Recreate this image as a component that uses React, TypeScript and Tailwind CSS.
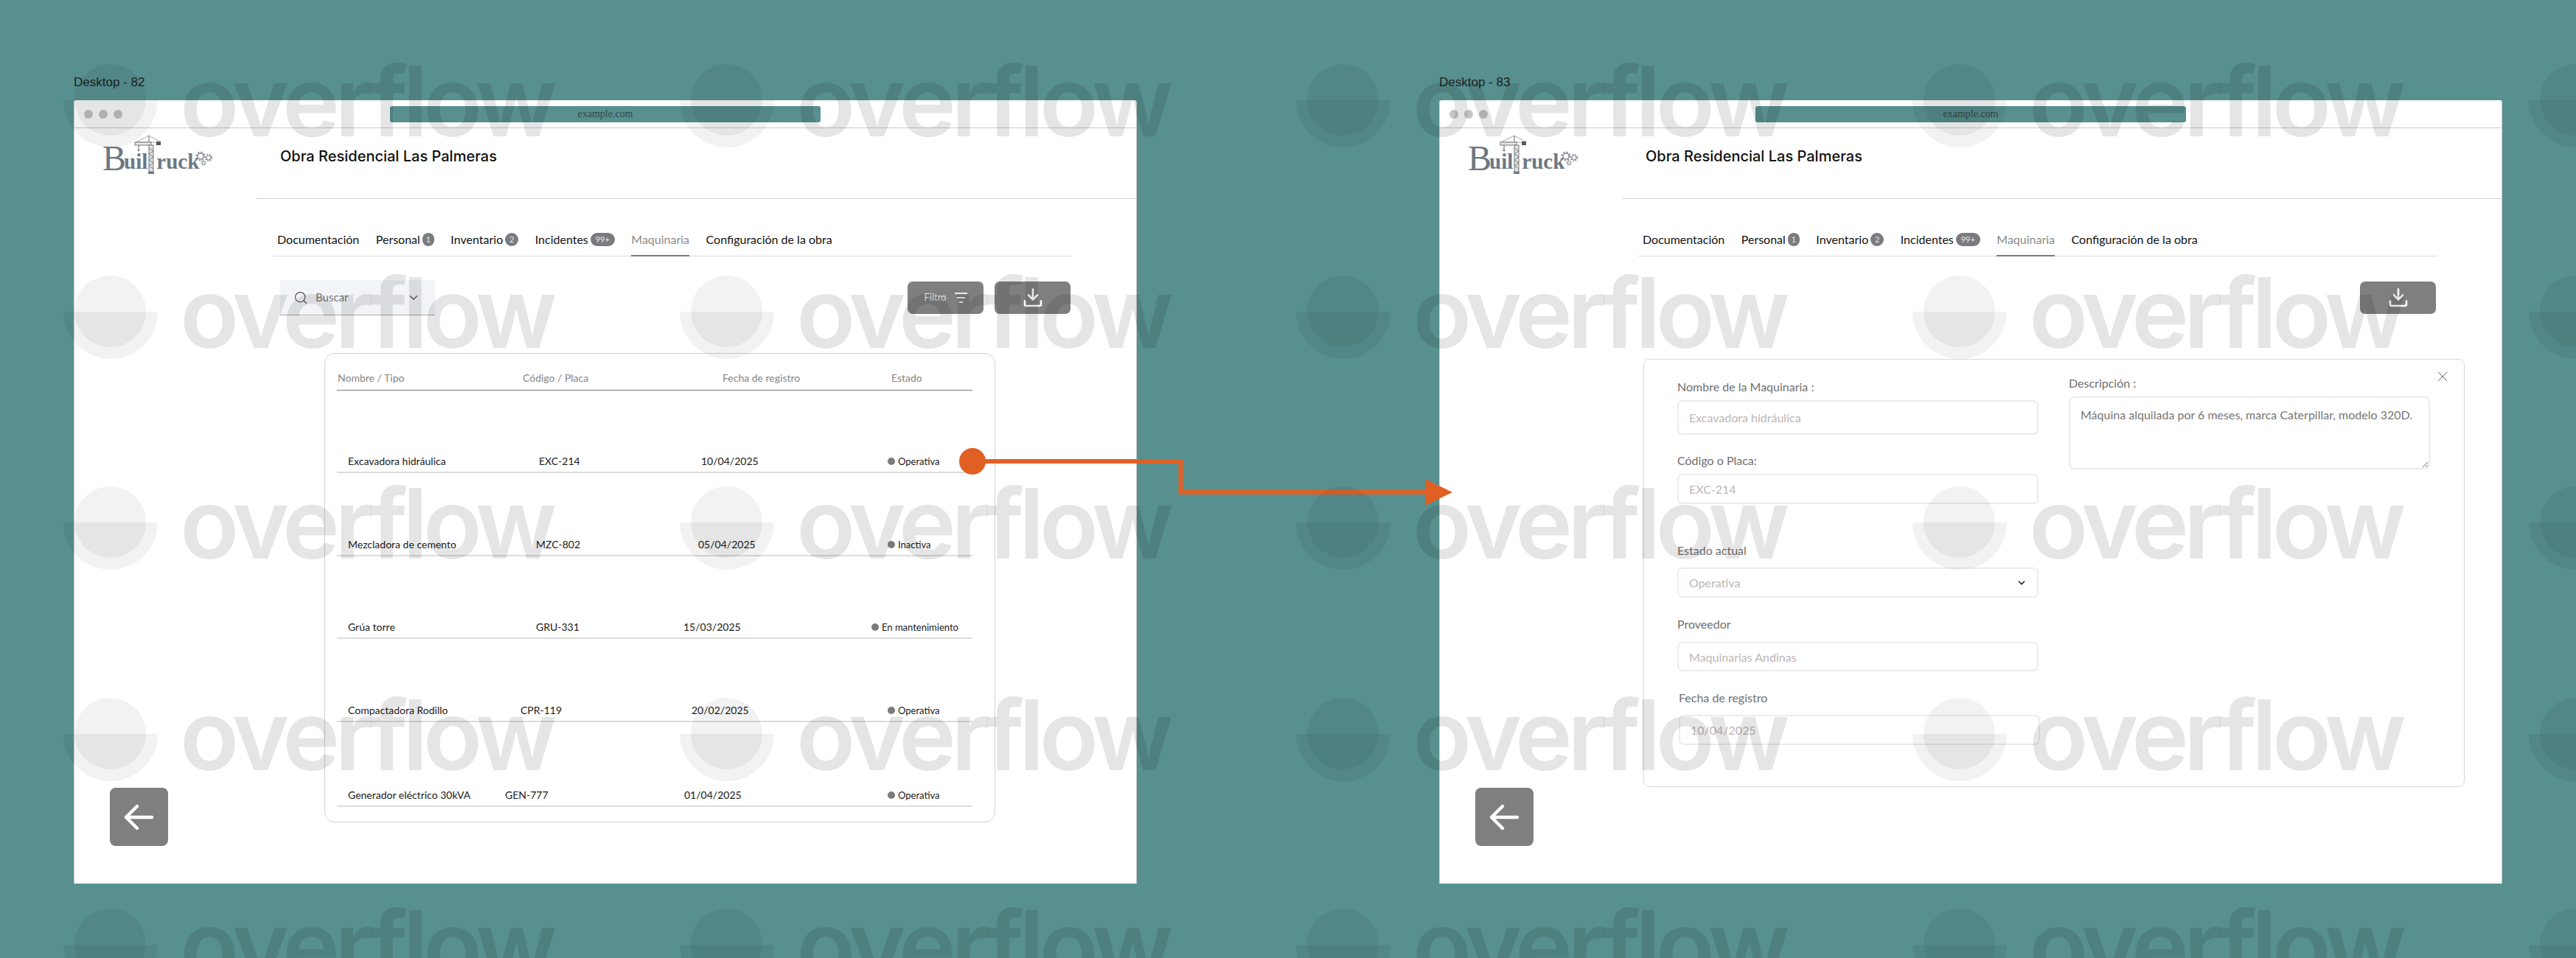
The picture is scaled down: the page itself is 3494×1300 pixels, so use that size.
import { ReactNode } from 'react';
import { ChevronDown, Search, X } from 'lucide-react';

const MACHINES = [
  { name: 'Excavadora hidráulica', code: 'EXC-214', date: '10/04/2025', status: 'Operativa', rowClass: 'h-[112px]', codeClass: 'pl-[46px]', dateClass: 'pl-[24px]', statusClass: 'pl-[22px]' },
  { name: 'Mezcladora de cemento', code: 'MZC-802', date: '05/04/2025', status: 'Inactiva', rowClass: 'h-[113px]', codeClass: 'pl-[42px]', dateClass: 'pl-[20px]', statusClass: 'pl-[22px]' },
  { name: 'Grúa torre', code: 'GRU-331', date: '15/03/2025', status: 'En mantenimiento', rowClass: 'h-[112px]', codeClass: 'pl-[42px]', dateClass: 'pl-0', statusClass: 'pl-0' },
  { name: 'Compactadora Rodillo', code: 'CPR-119', date: '20/02/2025', status: 'Operativa', rowClass: 'h-[113px]', codeClass: 'pl-[21px]', dateClass: 'pl-[11px]', statusClass: 'pl-[22px]' },
  { name: 'Generador eléctrico 30kVA', code: 'GEN-777', date: '01/04/2025', status: 'Operativa', rowClass: 'h-[115px]', codeClass: 'pl-0', dateClass: 'pl-[1px]', statusClass: 'pl-[22px]' },
];

const TABS = [
  { label: 'Documentación' },
  { label: 'Personal', badge: '1', badgeClass: 'w-[16px]' },
  { label: 'Inventario', badge: '2', badgeClass: 'w-[18px]' },
  { label: 'Incidentes', badge: '99+', badgeClass: 'w-[33px]' },
  { label: 'Maquinaria', active: true },
  { label: 'Configuración de la obra' },
];

function Logo() {
  return (
    <div className="relative h-[54px] w-[148px] font-['Liberation_Serif',serif] text-[#6c7883]">
      <div className="flex h-full items-end leading-none">
        <span className="text-[48px] leading-[44px]">B</span>
        <span className="-ml-[3px] text-[29px] leading-[36px] font-bold">uil</span>
        <span className="ml-[12px] text-[29px] leading-[36px] font-bold">ruck</span>
      </div>
      <svg className="absolute left-[43px] top-0" width="38" height="54" viewBox="0 0 38 54" fill="none">
        <path d="M20 1 L2 10 L36 10 Z" stroke="#8b8f94" strokeWidth="0.8" />
        <path d="M20 1 V14" stroke="#8b8f94" strokeWidth="1.4" />
        <rect x="1" y="10" width="22" height="4" stroke="#777" strokeWidth="1" fill="#e8e8e8" />
        <rect x="30" y="9" width="6" height="5" fill="#55595d" />
        <path d="M6 14 V21" stroke="#666" strokeWidth="1" />
        <circle cx="6" cy="21" r="1.2" fill="#666" />
        <rect x="20" y="14" width="6" height="36" fill="#e4e4e4" stroke="#777" strokeWidth="1" />
        <path d="M20 18 L26 22 L20 26 L26 30 L20 34 L26 38 L20 42 L26 46" stroke="#777" strokeWidth="1" />
        <rect x="19" y="50" width="8" height="3" fill="#6c7883" />
      </svg>
      <svg className="absolute left-[126px] top-[22px]" width="24" height="22" viewBox="0 0 24 22" fill="none" stroke="#85898d">
        <circle cx="7" cy="7" r="4" strokeWidth="1.5" />
        <circle cx="7" cy="7" r="5.6" strokeWidth="2" strokeDasharray="2 2.4" />
        <circle cx="18" cy="9" r="3" strokeWidth="1.2" />
        <circle cx="18" cy="9" r="4.5" strokeWidth="1.6" strokeDasharray="1.6 2" />
        <circle cx="11" cy="16" r="2" strokeWidth="1" />
        <circle cx="11" cy="16" r="3.2" strokeWidth="1.2" strokeDasharray="1.2 1.6" />
      </svg>
    </div>
  );
}

function DownloadButton() {
  return (
    <button className="flex h-[44px] w-[103px] items-center justify-center rounded-[7px] bg-[#7f7f7f]">
      <svg width="26" height="26" viewBox="0 0 26 26" fill="none" stroke="#fff" strokeWidth="2.6" strokeLinecap="round" strokeLinejoin="round">
        <path d="M13 1.5 V15 M7 9.5 L13 15.5 L19 9.5" />
        <path d="M2 17.5 V22 a2 2 0 0 0 2 2 H22 a2 2 0 0 0 2 -2 V17.5" />
      </svg>
    </button>
  );
}

function BrowserFrame({ label, toolbar, children }: { label: string; toolbar: ReactNode; children: ReactNode }) {
  return (
    <div className="w-[1442px]">
      <div className="h-[32px] font-['Liberation_Sans',sans-serif] text-[17px] leading-[16px] text-[#1c2222]">{label}</div>
      <div className="flex h-[1063px] flex-col rounded-t-[3px] border-x border-[#cfcfcf] bg-white">
        <div className="flex h-[38px] shrink-0 items-center border-b border-[#cccccc]">
          <div className="flex w-[428px] gap-[8px] pl-[13px]">
            <span className="size-[12px] rounded-full bg-[#c4c4c4]" />
            <span className="size-[12px] rounded-full bg-[#c4c4c4]" />
            <span className="size-[12px] rounded-full bg-[#c4c4c4]" />
          </div>
          <div className="flex h-[22px] w-[584px] items-center justify-center rounded-[3px] bg-[#588f8f] font-['Liberation_Serif',serif] text-[14px] text-[#2f4a4a]">
            example.com
          </div>
        </div>
        <div className="flex min-h-0 flex-1">
          <aside className="flex w-[247px] shrink-0 flex-col justify-between pb-[51px]">
            <div className="pl-[38px] pt-[9px]">
              <Logo />
            </div>
            <button className="ml-[48px] flex size-[79px] items-center justify-center rounded-[8px] bg-[#7f7f7f]">
              <svg width="44" height="36" viewBox="0 0 44 36" fill="none" stroke="#fff" strokeWidth="4.4" strokeLinecap="round" strokeLinejoin="round">
                <path d="M39 18 H4 M19 3 L4 18 L19 33" />
              </svg>
            </button>
          </aside>
          <main className="min-w-0 flex-1">
            <div className="h-[96px] border-b border-[#d0d0d0] pl-[32px] pt-[26px] font-['Inter',sans-serif] text-[20px] leading-[24px] font-medium text-[#111]">
              Obra Residencial Las Palmeras
            </div>
            <nav className="ml-[22px] flex h-[78px] w-[1084px] items-end gap-[22.5px] border-b border-[#dcdcdc] pl-[6px] font-['Lato',sans-serif] text-[16px] text-[#111]">
              {TABS.map((tab) => (
                <div
                  key={tab.label}
                  className={`-mb-[1px] flex h-[44px] items-center gap-[3px] border-b-2 ${tab.active ? 'border-[#7c7c7c] text-[#8a8a8a]' : 'border-transparent'}`}
                >
                  {tab.label}
                  {tab.badge && (
                    <span className={`flex h-[18px] items-center justify-center rounded-full bg-[#7b7b7f] text-[11px] text-[#e8e8e8] ${tab.badgeClass}`}>
                      {tab.badge}
                    </span>
                  )}
                </div>
              ))}
            </nav>
            <div className="ml-[32px] mt-[32px] flex h-[48px] w-[1072px] items-center justify-between">{toolbar}</div>
            {children}
          </main>
        </div>
      </div>
    </div>
  );
}

function MachineTable() {
  return (
    <div className="ml-[92px] mt-[51px] h-[637px] w-[910px] rounded-[14px] border border-[#d2d2d2] pl-[16px] pr-[30px] font-['Lato',sans-serif]">
      <div className="grid h-[50px] grid-cols-[228px_242px_255px_1fr] items-end border-b border-[#7d7d7d] pb-[6px] text-[14px] leading-[20px] text-[#858585]">
        <span className="pl-[1px]">Nombre / Tipo</span>
        <span className="pl-[24px]">Código / Placa</span>
        <span className="pl-[53px]">Fecha de registro</span>
        <span className="pl-[27px]">Estado</span>
      </div>
      {MACHINES.map((m) => (
        <div key={m.name} className={`grid grid-cols-[228px_242px_255px_1fr] items-end border-b-2 border-[#dcdcdc] pb-[4px] text-[14px] leading-[20px] text-[#1a1a1a] ${m.rowClass}`}>
          <span className="pl-[15px]">{m.name}</span>
          <span className={m.codeClass}>{m.code}</span>
          <span className={m.dateClass}>{m.date}</span>
          <span className={`flex items-center gap-[4px] text-[13px] ${m.statusClass}`}>
            <span className="size-[10px] rounded-full bg-[#7b7b7f]" />
            {m.status}
          </span>
        </div>
      ))}
    </div>
  );
}

const labelClass = 'block h-[20px] text-[16px] leading-[20px] text-[#6f6f6f]';
const inputClass = 'block w-[490px] rounded-[7px] border-2 border-[#ececec] bg-transparent pl-[14px] text-[16px] text-[#bdb6b6] placeholder:text-[#bdb6b6] outline-none';

function MachineForm() {
  return (
    <div className="relative ml-[29px] mt-[59px] flex h-[581px] w-[1114px] gap-[39px] rounded-[8px] border border-[#d8d8d8] pl-[45px] font-['Lato',sans-serif]">
      <div className="w-[492px] pt-[27px]">
        <label className={labelClass}>Nombre de la Maquinaria :</label>
        <input readOnly placeholder="Excavadora hidráulica" className={`${inputClass} mt-[8px] h-[47px]`} />
        <label className={`${labelClass} mt-[25px]`}>Código o Placa:</label>
        <input readOnly placeholder="EXC-214" className={`${inputClass} mt-[8px] h-[41px]`} />
        <label className={`${labelClass} mt-[53px]`}>Estado actual</label>
        <div className={`${inputClass} mt-[13px] flex h-[41px] items-center justify-between pr-[14px]`}>
          Operativa
          <ChevronDown className="size-[14px] text-[#222]" strokeWidth={3} />
        </div>
        <label className={`${labelClass} mt-[26px]`}>Proveedor</label>
        <input readOnly placeholder="Maquinarias Andinas" className={`${inputClass} mt-[14px] h-[40px]`} />
        <div className="ml-[2px]">
          <label className={`${labelClass} mt-[26px]`}>Fecha de registro</label>
          <input readOnly placeholder="10/04/2025" className={`${inputClass} mt-[13px] h-[41px]`} />
        </div>
      </div>
      <div className="w-[490px] pt-[22px]">
        <label className={labelClass}>Descripción :</label>
        <textarea
          readOnly
          defaultValue="Máquina alquilada por 6 meses, marca Caterpillar, modelo 320D."
          className="mt-[8px] block h-[99px] w-[490px] rounded-[7px] border-2 border-[#ececec] bg-transparent px-[14px] pt-[12px] text-[16px] leading-[22px] text-[#767676] outline-none"
        />
      </div>
      <X className="absolute left-[1071px] top-[11px] size-[24px] text-[#666]" strokeWidth={1} />
    </div>
  );
}

function Watermark() {
  return (
    <div className="pointer-events-none absolute inset-0 grid auto-rows-[286.5px] grid-cols-[repeat(5,836px)] pl-[86px] pt-[87px]">
      {Array.from({ length: 25 }).map((_, i) => (
        <div key={i} className="relative">
          <div className="absolute left-[15px] top-0 size-[97px] rounded-full bg-black/5" />
          <div className="absolute left-0 top-[49px] h-[64px] w-[128px] rounded-b-full bg-black/5" />
          {i % 5 < 4 && (
            <div className="absolute left-[158px] top-[-30px] font-['Inter',sans-serif] text-[132px] leading-[160px] font-semibold tracking-[-7px] text-black/10">
              overflow
            </div>
          )}
        </div>
      ))}
    </div>
  );
}

export default function App() {
  return (
    <div className="relative h-[1300px] w-[3494px] overflow-hidden bg-[#588f8f]">
      <div className="flex gap-[410px] pl-[100px] pt-[104px]">
        <BrowserFrame
          label="Desktop - 82"
          toolbar={
            <>
              <div className="flex h-[48px] w-[210px] items-center border-b border-[#a8a8a8] bg-[#f3f4f8] pl-[18px] font-['Lato',sans-serif] text-[15px] text-[#7a7a7a]">
                <Search className="size-[20px] text-[#555]" strokeWidth={1.5} />
                <span className="ml-[10px] w-[124px]">Buscar</span>
                <ChevronDown className="size-[18px] text-[#555]" strokeWidth={1.75} />
              </div>
              <div className="flex gap-[15px]">
                <button className="flex h-[44px] w-[103px] items-center justify-center gap-[11px] rounded-[7px] bg-[#7f7f7f] font-['Lato',sans-serif] text-[13px] text-[#e8e8e8]">
                  Filtro
                  <svg width="17" height="14" viewBox="0 0 17 14" fill="none" stroke="#e8e8e8" strokeWidth="2">
                    <path d="M0 1 H17 M3 7 H14 M6 13 H11" />
                  </svg>
                </button>
                <DownloadButton />
              </div>
            </>
          }
        >
          <MachineTable />
        </BrowserFrame>
        <BrowserFrame
          label="Desktop - 83"
          toolbar={
            <div className="ml-auto">
              <DownloadButton />
            </div>
          }
        >
          <MachineForm />
        </BrowserFrame>
      </div>

      <svg className="pointer-events-none absolute left-0 top-0" width="3494" height="1300" fill="none">
        <circle cx="1319" cy="626" r="18" fill="#e06024" />
        <path d="M1319 626 H1601.5 V668 H1940" stroke="#e06024" strokeWidth="6" />
        <path d="M1933 650 L1970 668 L1933 686 Z" fill="#e06024" />
      </svg>

      <Watermark />
    </div>
  );
}
